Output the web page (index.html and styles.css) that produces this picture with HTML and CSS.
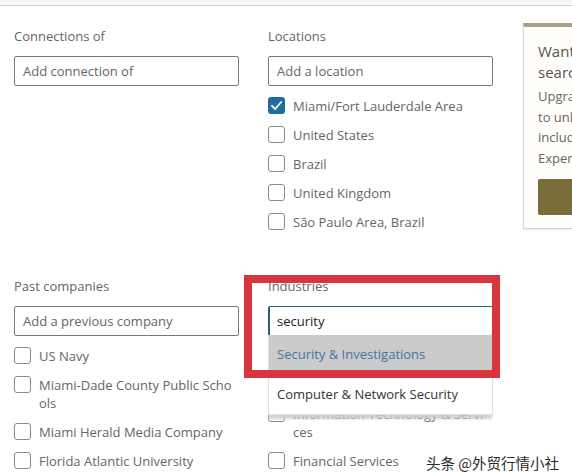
FILE: index.html
```html
<!DOCTYPE html>
<html lang="en">
<head>
<meta charset="utf-8">
<title>Search filters</title>
<link rel="stylesheet" href="styles.css">
</head>
<body>
<div class="topbar"></div>
<main class="page">
  <div class="filters">
    <section class="filter">
      <div class="label">Connections of</div>
      <div class="input placeholder">Add connection of</div>
    </section>
    <section class="filter">
      <div class="label">Locations</div>
      <div class="input placeholder">Add a location</div>
      <ul class="options">
        <li class="option"><span class="box checked"><svg viewBox="0 0 17 17" width="17" height="17"><path d="M4 8.8 L7.2 12 L13.2 5" fill="none" stroke="#fff" stroke-width="1.8" stroke-linecap="round" stroke-linejoin="round"/></svg></span><span class="text">Miami/Fort Lauderdale Area</span></li>
        <li class="option"><span class="box"></span><span class="text">United States</span></li>
        <li class="option"><span class="box"></span><span class="text">Brazil</span></li>
        <li class="option"><span class="box"></span><span class="text">United Kingdom</span></li>
        <li class="option"><span class="box"></span><span class="text">São Paulo Area, Brazil</span></li>
      </ul>
    </section>
    <section class="filter">
      <div class="label">Past companies</div>
      <div class="input placeholder">Add a previous company</div>
      <ul class="options">
        <li class="option"><span class="box"></span><span class="text">US Navy</span></li>
        <li class="option"><span class="box"></span><span class="text">Miami-Dade County Public Schools</span></li>
        <li class="option"><span class="box"></span><span class="text">Miami Herald Media Company</span></li>
        <li class="option"><span class="box"></span><span class="text">Florida Atlantic University</span></li>
      </ul>
    </section>
    <section class="filter">
      <div class="label">Industries</div>
      <div class="combo">
        <div class="input focused">security</div>
        <ul class="dropdown">
          <li class="suggestion active">Security &amp; Investigations</li>
          <li class="suggestion">Computer &amp; Network Security</li>
        </ul>
      </div>
      <ul class="options">
        <li class="option"><span class="box"></span><span class="text">Military</span></li>
        <li class="option"><span class="box"></span><span class="text">Law Enforcement</span></li>
        <li class="option"><span class="box"></span><span class="text">Information Technology &amp; Servic­es</span></li>
        <li class="option"><span class="box"></span><span class="text">Financial Services</span></li>
      </ul>
    </section>
  </div>
  <aside class="upsell">
    <p class="upsell-title">Want more advanced<br>search filters?</p>
    <p class="upsell-body">Upgrade to Premium<br>to unlock more filters,<br>including Years of<br>Experience and more.</p>
    <button class="upsell-btn" type="button">Try Premium</button>
  </aside>
</main>
<div class="highlight"></div>
<div class="watermark">头条 @外贸行情小社</div>
</body>
</html>
```
FILE: styles.css
```css
html, body {
  margin: 0;
  padding: 0;
  overflow: hidden;
  background: #fff;
}
body {
  font-family: "Open Sans", "Noto Sans", sans-serif;
  font-size: 13px;
  color: #666;
  position: relative;
  height: 473px;
}
.topbar {
  height: 5px;
  background: #f7f7f7;
  border-bottom: 1px solid #d5d5d5;
}
.page {
  display: flex;
  align-items: flex-start;
  gap: 30px;
  padding-left: 14px;
}
.filters {
  display: grid;
  grid-template-columns: 225px 225px;
  column-gap: 29px;
  row-gap: 45px;
  padding-top: 20px;
  flex: none;
}
.filter {
  display: flex;
  flex-direction: column;
}
.label {
  height: 20px;
  line-height: 20px;
  margin-bottom: 10px;
  color: #666;
}
.input {
  box-sizing: border-box;
  height: 30px;
  line-height: 28px;
  border: 1px solid #777;
  border-radius: 2px;
  padding: 0 8px;
  color: #333;
  background: #fff;
}
.input.placeholder {
  color: #666;
}
.input.focused {
  border-color: #2c5f6f;
  border-left-width: 2px;
  padding-left: 7px;
  color: #222;
}
.combo {
  position: relative;
}
.dropdown {
  position: absolute;
  left: 0;
  top: 29px;
  width: 225px;
  margin: 0;
  padding: 0;
  list-style: none;
  background: #fff;
  border: 1px solid #e0e0e0;
  border-top: none;
  box-sizing: border-box;
  box-shadow: 0 5px 2px -1px rgba(205, 205, 205, 0.85);
  z-index: 2;
}
.suggestion {
  height: 40px;
  line-height: 40px;
  padding-left: 8px;
  color: #333;
}
.suggestion.active {
  height: 39px;
  line-height: 39px;
  background: #cbcbcb;
  color: #3f74a3;
}
.options {
  list-style: none;
  margin: 11px 0 0;
  padding: 0;
  display: flex;
  flex-direction: column;
  gap: 11px;
}
.option {
  display: flex;
  align-items: flex-start;
  gap: 8px;
  line-height: 18px;
}
.box {
  flex: none;
  box-sizing: border-box;
  width: 17px;
  height: 17px;
  border: 1px solid #8a8a8a;
  border-radius: 3px;
  background: #fff;
}
.box.checked {
  border: none;
  background: #1d6e9e;
}
.box svg {
  display: block;
}
.text {
  flex: 1;
  min-width: 0;
  word-break: break-all;
  color: #666;
}
.upsell {
  flex: none;
  box-sizing: border-box;
  width: 220px;
  margin-top: 17px;
  padding: 14px 14px 13px;
  background: #fffefa;
  border: 1px solid #d8d8d4;
  border-top: 4px solid #a9a186;
  box-shadow: 0 1px 2px rgba(0, 0, 0, 0.1);
}
.upsell-title {
  margin: 0;
  font-size: 15px;
  line-height: 21px;
  color: #555;
}
.upsell-body {
  margin: 3px 0 0;
  font-size: 13px;
  line-height: 20.5px;
  color: #666;
}
.upsell-btn {
  display: block;
  margin-top: 11px;
  width: 190px;
  height: 36px;
  border: none;
  border-radius: 2px;
  background: #7b6c3c;
  color: #fff;
  font: inherit;
  font-size: 15px;
}
.highlight {
  position: absolute;
  left: 244px;
  top: 275px;
  width: 256px;
  height: 103px;
  box-sizing: border-box;
  border: 8px solid #d8363d;
  z-index: 3;
}
.watermark {
  position: absolute;
  left: 426px;
  top: 453px;
  font-family: "Noto Sans CJK SC", sans-serif;
  font-size: 14.5px;
  line-height: 20px;
  color: #2a2a2a;
  text-shadow: 0 0 2px #fff, 0 0 2px #fff;
  z-index: 4;
}
```
